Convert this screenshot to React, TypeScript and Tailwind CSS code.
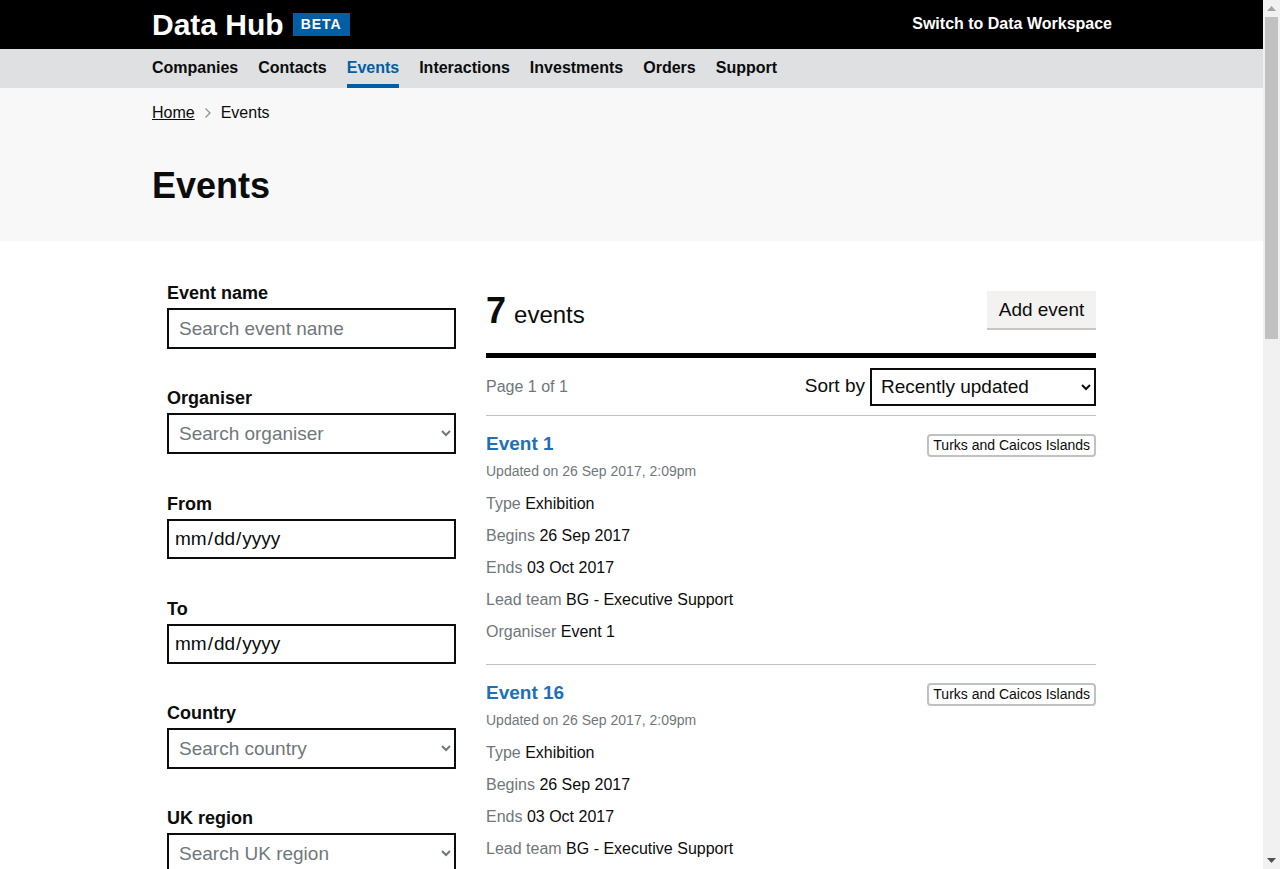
import React from "react";

const navItems = ["Companies", "Contacts", "Events", "Interactions", "Investments", "Orders", "Support"];

function Field({ label, placeholder, kind, className }: { label: string; placeholder?: string; kind: "text" | "select" | "date"; className: string }) {
  return (
    <div className={className}>
      <label className="block text-[18px] font-bold leading-[20px] mb-[5px] text-[#0b0c0c]">{label}</label>
      {kind === "text" && (
        <input readOnly placeholder={placeholder} className="block w-full h-[41px] border-2 border-[#0b0c0c] px-[10px] text-[19px] bg-white placeholder:text-[#6f777b] outline-none" />
      )}
      {kind === "select" && (
        <select defaultValue="" className="block w-full h-[41px] border-2 border-[#0b0c0c] px-[6px] text-[19px] bg-white text-[#6f777b] outline-none">
          <option value="">{placeholder}</option>
        </select>
      )}
      {kind === "date" && (
        <input type="date" readOnly className="block w-full h-[40px] border-2 border-[#0b0c0c] px-[5px] text-[19px] bg-white text-[#0b0c0c] outline-none" />
      )}
    </div>
  );
}

function Row({ k, v }: { k: string; v: string }) {
  return (
    <div className="text-[16px] leading-[20px] h-[32px] pt-[0px]">
      <span className="text-[#6f777b]">{k}</span> <span className="text-[#0b0c0c]">{v}</span>
    </div>
  );
}

function EventItem({ name }: { name: string }) {
  return (
    <div className="border-b border-[#bfc1c3] h-[249px] pt-[16px]">
      <div className="flex justify-between items-start">
        <a className="text-[19px] font-bold leading-[24px] text-[#1d70b8]">{name}</a>
        <span className="mt-[2px] border-2 border-[#bfc1c3] rounded-[4px] text-[14px] leading-[19px] px-[4px] text-[#0b0c0c]">Turks and Caicos Islands</span>
      </div>
      <div className="text-[14px] leading-[18px] text-[#6f777b] mt-[5px] mb-[14px]">Updated on 26 Sep 2017, 2:09pm</div>
      <Row k="Type" v="Exhibition" />
      <Row k="Begins" v="26 Sep 2017" />
      <Row k="Ends" v="03 Oct 2017" />
      <Row k="Lead team" v="BG - Executive Support" />
      <Row k="Organiser" v={name} />
    </div>
  );
}

export default function App() {
  return (
    <div className="flex h-[869px] overflow-hidden bg-white font-['Liberation_Sans',Arial,sans-serif] text-[#0b0c0c]">
      <div className="w-[1263px] shrink-0 overflow-hidden">
        <header className="bg-black h-[49px]">
          <div className="w-[960px] ml-[152px] flex items-center justify-between h-full">
            <div className="flex items-center">
              <span className="text-white font-bold text-[30px] leading-[49px]">Data Hub</span>
              <span className="ml-[9px] bg-[#005ea5] text-white font-bold text-[14px] tracking-[1px] h-[23px] w-[57px] leading-[23px] text-center">BETA</span>
            </div>
            <a className="text-white font-bold text-[16px] -mt-[2px]">Switch to Data Workspace</a>
          </div>
        </header>
        <nav className="bg-[#dee0e2] h-[39px]">
          <div className="ml-[152px] flex gap-[20px] h-full">
            {navItems.map((n) => (
              <a key={n} className={"text-[16px] font-bold h-full leading-[38px] " + (n === "Events" ? "text-[#005ea5] border-b-4 border-[#005ea5]" : "text-[#0b0c0c]")}>{n}</a>
            ))}
          </div>
        </nav>
        <div className="bg-[#f8f8f8] h-[153px]">
          <div className="ml-[152px] pt-[15px] flex items-center text-[16px] leading-[20px]">
            <a className="underline">Home</a>
            <svg width="8" height="12" viewBox="0 0 8 12" className="mx-[9px]" fill="none" stroke="#8f8f8f" strokeWidth="1.2"><path d="M1.5 1.5 6 6l-4.5 4.5" /></svg>
            <span>Events</span>
          </div>
          <h1 className="ml-[152px] mt-[40px] text-[36px] font-bold leading-[45px]">Events</h1>
        </div>
        <div className="flex pl-[167px] pt-[42px]">
          <aside className="w-[289px] shrink-0">
            <Field className="mb-[39px]" label="Event name" placeholder="Search event name" kind="text" />
            <Field className="mb-[40px]" label="Organiser" placeholder="Search organiser" kind="select" />
            <Field className="mb-[40px]" label="From" kind="date" />
            <Field className="mb-[39px]" label="To" kind="date" />
            <Field className="mb-[39px]" label="Country" placeholder="Search country" kind="select" />
            <Field className="" label="UK region" placeholder="Search UK region" kind="select" />
          </aside>
          <main className="w-[610px] ml-[30px] shrink-0">
            <div className="flex items-start justify-between h-[75px] border-b-[5px] border-black">
              <div className="pt-[5px] leading-[45px]">
                <span className="text-[36px] font-bold">7</span>
                <span className="text-[24px] ml-[8px]">events</span>
              </div>
              <button className="mt-[8px] w-[109px] h-[39px] bg-[#f3f2f1] border-b-2 border-[#c8c5c2] text-[19px] leading-[37px]">Add event</button>
            </div>
            <div className="flex items-center justify-between h-[58px] border-b border-[#bfc1c3]">
              <span className="text-[16px] text-[#6f777b]">Page 1 of 1</span>
              <div className="flex items-center">
                <span className="text-[19px] mr-[5px]">Sort by</span>
                <select defaultValue="r" className="w-[226px] h-[38px] border-2 border-[#0b0c0c] px-[5px] text-[19px] bg-white outline-none">
                  <option value="r">Recently updated</option>
                </select>
              </div>
            </div>
            <EventItem name="Event 1" />
            <EventItem name="Event 16" />
          </main>
        </div>
      </div>
      <div className="w-[17px] shrink-0 bg-[#f1f1f1] flex flex-col items-center justify-between h-[869px]">
        <div className="w-full">
          <div className="h-[17px] flex items-center justify-center">
            <svg width="9" height="5" viewBox="0 0 9 5"><path d="M4.5 0 9 5H0z" fill="#a3a3a3" /></svg>
          </div>
          <div className="h-[322px] bg-[#c1c1c1] mx-[2px]" />
        </div>
        <div className="h-[17px] flex items-center justify-center">
          <svg width="9" height="5" viewBox="0 0 9 5"><path d="M0 0h9L4.5 5z" fill="#505050" /></svg>
        </div>
      </div>
    </div>
  );
}
